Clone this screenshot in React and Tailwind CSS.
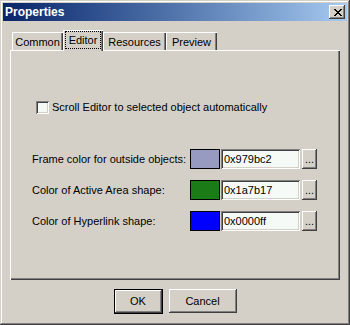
import { useState } from "react";

const raised =
  "shadow-[inset_-1px_-1px_0_#404040,inset_1px_1px_0_#ffffff,inset_-2px_-2px_0_#808080,inset_2px_2px_0_#d4d0c8]";
const sunken =
  "shadow-[inset_1px_1px_0_#808080,inset_-1px_-1px_0_#ffffff,inset_2px_2px_0_#404040,inset_-2px_-2px_0_#d4d0c8]";

const tabs = [
  { id: "common", label: "Common", width: "w-[51px]" },
  { id: "editor", label: "Editor", width: "w-[40px]" },
  { id: "resources", label: "Resources", width: "w-[63px]" },
  { id: "preview", label: "Preview", width: "w-[51px]" },
];

const colorRows = [
  { label: "Frame color for outside objects:", value: "0x979bc2", swatch: "bg-[#979bc2]" },
  { label: "Color of Active Area shape:", value: "0x1a7b17", swatch: "bg-[#1a7b17]" },
  { label: "Color of Hyperlink shape:", value: "0x0000ff", swatch: "bg-[#0000ff]" },
];

const CloseGlyph = () => (
  <svg width="8" height="7" viewBox="0 0 8 7" shapeRendering="crispEdges">
    <path
      fill="#000"
      d="M0 0h2v1H0zM6 0h2v1H6zM1 1h2v1H1zM5 1h2v1H5zM2 2h4v1H2zM3 3h2v1H3zM2 4h4v1H2zM1 5h2v1H1zM5 5h2v1H5zM0 6h2v1H0zM6 6h2v1H6z"
    />
  </svg>
);

const Tab = ({ tab, active, onClick }) => {
  if (active) {
    return (
      <div
        onClick={onClick}
        className={`${tab.width} relative z-10 -mb-px h-[21px] bg-[#d4d0c8] pt-[1px] flex justify-center shadow-[inset_1px_1px_0_#ffffff,inset_-1px_0_0_#404040,inset_-2px_0_0_#808080]`}
      >
        <span className="h-[18px] px-[3px] border border-dotted border-black leading-[16px]">{tab.label}</span>
      </div>
    );
  }
  return (
    <div
      onClick={onClick}
      className={`${tab.width} h-[18px] bg-[#d4d0c8] flex items-center justify-center pt-[2px] cursor-default shadow-[inset_1px_1px_0_#ffffff,inset_-1px_0_0_#404040,inset_-2px_0_0_#808080]`}
    >
      {tab.label}
    </div>
  );
};

const ColorRow = ({ row }) => (
  <div className="flex items-center h-[20px]">
    <span className="w-[158px]">{row.label}</span>
    <div className={`w-[30px] h-[20px] border border-black ${row.swatch}`} />
    <div className={`ml-[1px] w-[79px] h-[20px] bg-[#f6faf6] ${sunken} flex items-center pl-[3px]`}>
      {row.value}
    </div>
    <div className={`ml-[2px] w-[15px] h-[20px] bg-[#d4d0c8] ${raised} flex items-end justify-center pb-[4px] leading-none`}>
      ...
    </div>
  </div>
);

export default function App() {
  const [active, setActive] = useState("editor");
  const [scroll, setScroll] = useState(false);

  return (
    <div
      className={`w-[350px] h-[325px] bg-[#d4d0c8] p-[3px] flex flex-col text-[11px] text-black font-['Liberation_Sans',Arial,sans-serif] select-none shadow-[inset_-1px_-1px_0_#404040,inset_1px_1px_0_#d4d0c8,inset_-2px_-2px_0_#808080,inset_2px_2px_0_#ffffff]`}
    >
      {/* title bar */}
      <div className="h-[18px] flex items-center justify-between pl-[2px] pr-[2px] bg-gradient-to-r from-[#0a246a] to-[#a6caf0]">
        <span className="text-white font-bold text-[12px]">Properties</span>
        <div className={`w-[16px] h-[14px] bg-[#d4d0c8] ${raised} flex items-center justify-center pl-[1px]`}>
          <CloseGlyph />
        </div>
      </div>

      {/* tabs */}
      <div className="mt-[9px] mx-[7px] flex flex-col">
        <div className="flex items-end h-[20px] pl-[2px]">
          {tabs.map(tab => (
            <Tab key={tab.id} tab={tab} active={active === tab.id} onClick={() => setActive(tab.id)} />
          ))}
        </div>
        <div className="h-[230px] bg-[#d4d0c8] shadow-[inset_1px_1px_0_#ffffff,inset_-1px_-1px_0_#404040,inset_-2px_-2px_0_#808080] pt-[51px]">
          <label className="flex items-center pl-[26px] h-[13px]" onClick={() => setScroll(!scroll)}>
            <span className={`w-[13px] h-[13px] bg-[#f6faf6] ${sunken} flex items-center justify-center`}>
              {scroll && <span className="text-[9px] font-bold leading-none">✓</span>}
            </span>
            <span className="ml-[3px]">Scroll Editor to selected object automatically</span>
          </label>

          <div className="mt-[35px] pl-[22px] flex flex-col gap-[11px]">
            {colorRows.map(row => (
              <ColorRow key={row.label} row={row} />
            ))}
          </div>
        </div>
      </div>

      {/* buttons */}
      <div className="mt-[9px] flex justify-center items-start gap-[6px]">
        <div className="w-[49px] h-[25px] border border-black bg-[#d4d0c8]">
          <div className={`w-full h-full ${raised} flex items-center justify-center`}>OK</div>
        </div>
        <div className={`w-[68px] h-[24px] bg-[#d4d0c8] ${raised} flex items-center justify-center`}>Cancel</div>
      </div>
    </div>
  );
}
